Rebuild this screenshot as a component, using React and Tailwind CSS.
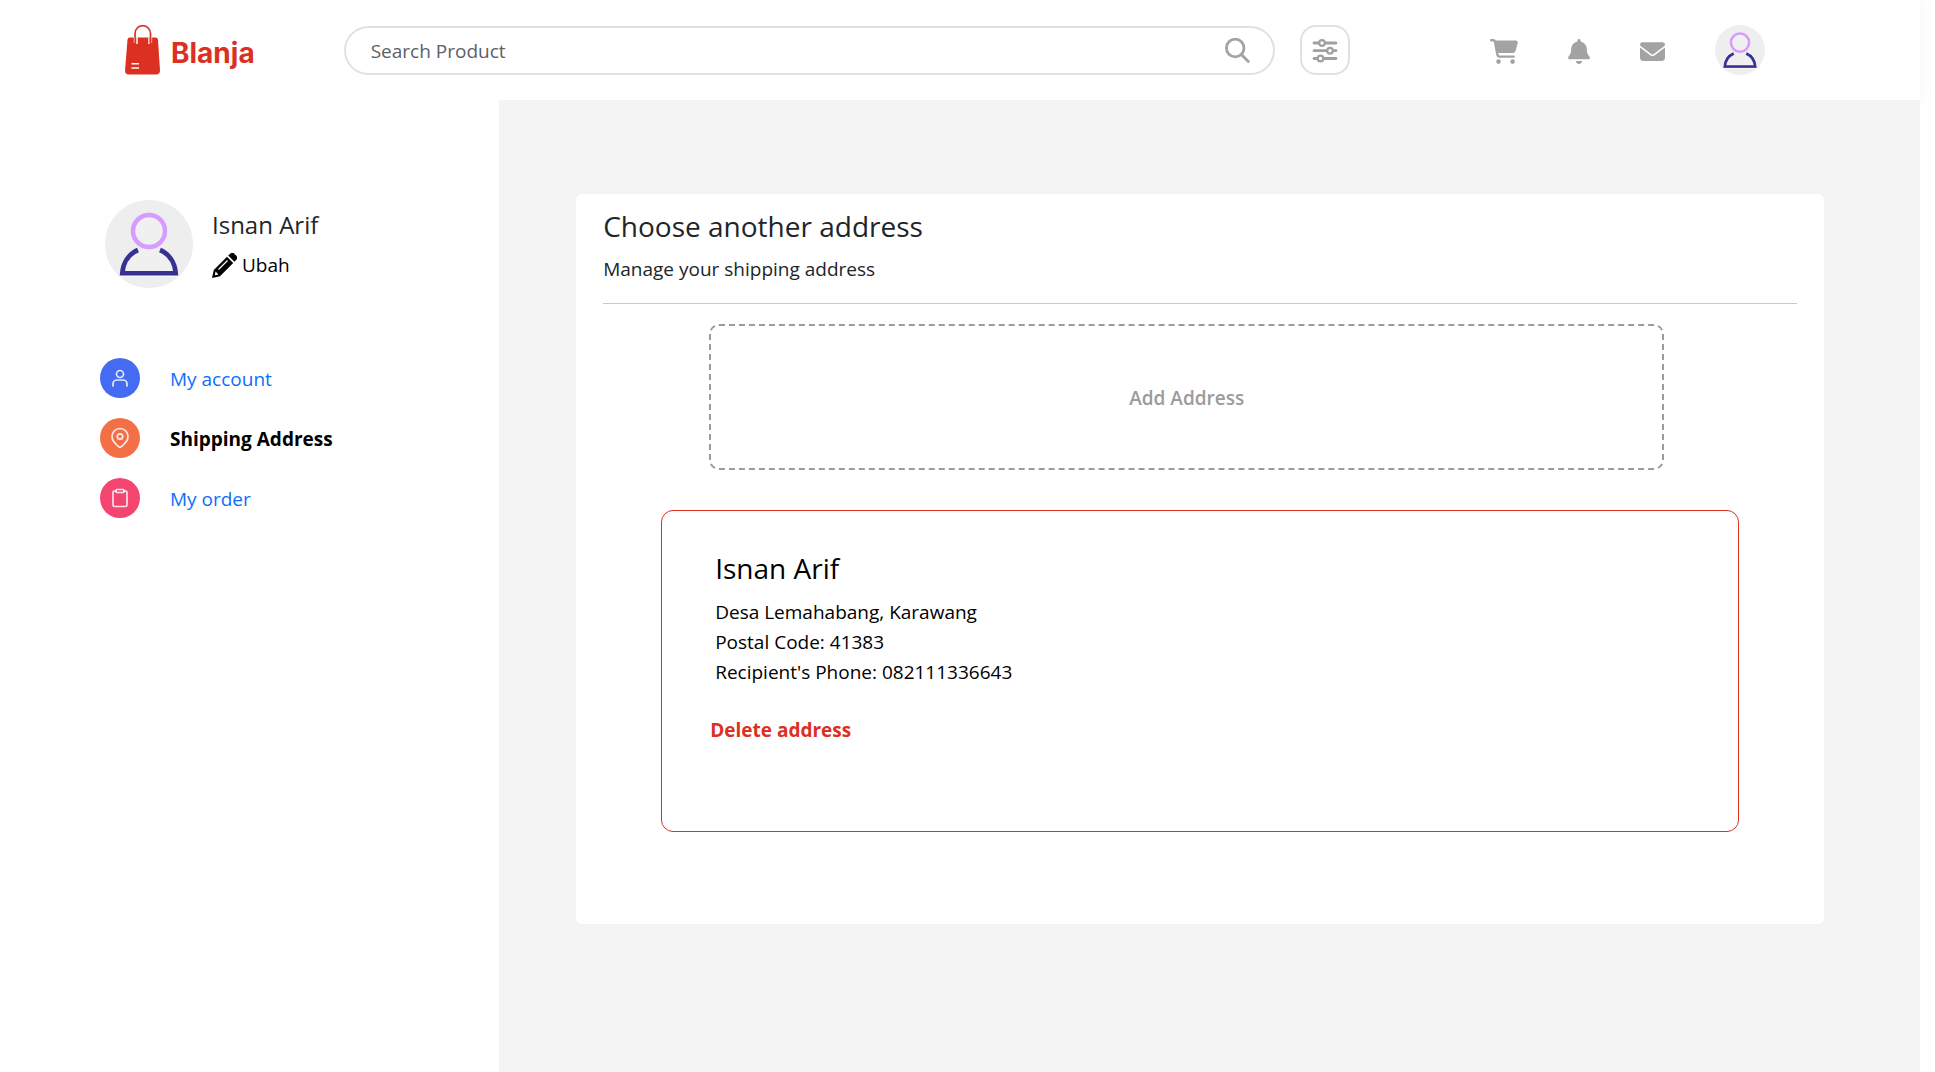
import { FaCartShopping, FaBell, FaEnvelope } from "react-icons/fa6";

function Logo() {
  return (
    <a href="#home" className="flex shrink-0 items-center gap-[10px] text-[#db3022]">
      <svg viewBox="0 0 36 50" className="h-[50px] w-9" aria-hidden="true">
        <path d="M5 12.500H30.500a2.500 2.500 0 0 1 2.500 2.300L35 45.500a4 4 0 0 1-4 4H4a4 4 0 0 1-4-4L2.500 14.800A2.500 2.500 0 0 1 5 12.500Z" fill="currentColor" />
        <path d="M12 19v-7M24 19v-7" fill="none" stroke="#fff" strokeWidth="1.400" />
        <path d="M10 18V8.500a7.700 7.700 0 0 1 15.500 0V18" fill="none" stroke="currentColor" strokeWidth="1.700" />
        <path d="M9.200 12V18M26.700 12V18" fill="none" stroke="#fff" strokeWidth="0.600" />
        <path d="M6.500 38.700h7.500M6.500 43h7.500" stroke="#fff" strokeWidth="1.400" />
      </svg>
      <span className="pt-[5px] font-['Inter',sans-serif] text-[28px] font-bold leading-9">Blanja</span>
    </a>
  );
}

function Avatar({ className }) {
  return (
    <svg viewBox="0 0 88 88" className={className} role="img" aria-label="Profile picture">
      <circle cx="44" cy="44" r="44" fill="#eee" />
      <circle cx="44" cy="31" r="16" fill="#f0f0f0" stroke="#d79cff" strokeWidth="4.500" />
      <path d="M33 50C23.500 54 18 63 17.300 73.300H70.700C70 63 64.500 54 55 50" fill="#f0f0f0" stroke="#393093" strokeWidth="4.700" />
      <path d="M15 76.200H73" stroke="#fff" strokeWidth="1" />
    </svg>
  );
}

const stroke = { fill: "none", stroke: "#fff", strokeOpacity: 0.85, strokeWidth: 1.7, strokeLinecap: "round", strokeLinejoin: "round" };

const links = [
  {
    label: "My account",
    color: "bg-[#456bf3]",
    icon: (
      <g {...stroke}>
        <circle cx="20" cy="16" r="3.500" />
        <path d="M13 28v-2a4 4 0 0 1 4-4h6a4 4 0 0 1 4 4v2" />
      </g>
    ),
  },
  {
    label: "Shipping Address",
    color: "bg-[#f36f45]",
    active: true,
    icon: (
      <g {...stroke}>
        <path d="M28 18.500c0 6-8 11-8 11s-8-5-8-11a8 8 0 0 1 16 0Z" />
        <circle cx="20" cy="18.500" r="2.700" />
      </g>
    ),
  },
  {
    label: "My order",
    color: "bg-[#f3456f]",
    icon: (
      <g {...stroke}>
        <path d="M24 13h1.500a1.500 1.500 0 0 1 1.500 1.500v12.500a1.500 1.500 0 0 1-1.500 1.500h-11a1.500 1.500 0 0 1-1.500-1.500v-12.500a1.500 1.500 0 0 1 1.500-1.500H16" />
        <rect x="16" y="11.500" width="8" height="3" rx="1" />
      </g>
    ),
  },
];

function Header() {
  return (
    <header className="flex h-[100px] items-center bg-white pl-[125px] pr-[155px] shadow-[0_0_16px_rgba(0,0,0,0.05)]">
      <Logo />
      <form className="ml-[89px] flex h-[49px] flex-1 items-center rounded-full border-2 border-[#e1e1e1] pl-[25px] pr-[23px]">
        <input
          type="text"
          aria-label="Search Product"
          placeholder="Search Product"
          className="min-w-0 flex-1 bg-transparent pt-[2px] text-[19px] leading-[30px] outline-none placeholder:text-[#5c6166]"
        />
        <button type="button" aria-label="Search">
          <svg viewBox="0 0 25 25" className="size-[25px]" fill="none" stroke="#a3a3a3" strokeWidth="2.800" strokeLinecap="round">
            <circle cx="10.200" cy="10" r="8.800" />
            <path d="M16.800 17l6.500 6.500" />
          </svg>
        </button>
      </form>
      <button type="button" aria-label="Filter" className="ml-[25px] flex size-[50px] items-center justify-center rounded-2xl border-2 border-[#e1e1e1]">
        <svg viewBox="0 0 26 25" className="h-[25px] w-[26px]" fill="#fff" stroke="#a0a0a0" strokeWidth="2.800" strokeLinecap="round">
          <path d="M2 5H24M2 12.700H24M2 20.500H24" />
          <circle cx="10" cy="5" r="2.800" strokeWidth="2.200" />
          <circle cx="18" cy="12.700" r="2.800" strokeWidth="2.200" />
          <circle cx="8.500" cy="20.500" r="2.800" strokeWidth="2.200" />
        </svg>
      </button>
      <nav className="ml-[140px] flex items-center gap-[50px] text-[#a3a3a3]" aria-label="Shortcuts">
        <a href="#cart" aria-label="Cart" className="pt-[2px]"><FaCartShopping className="h-[25px] w-7" /></a>
        <a href="#notifications" aria-label="Notifications" className="pt-[2px]"><FaBell className="h-[25px] w-[22px]" /></a>
        <a href="#messages" aria-label="Messages" className="pt-[2px]"><FaEnvelope className="size-[25px]" /></a>
        <a href="#profile" aria-label="Profile"><Avatar className="size-[50px]" /></a>
      </nav>
    </header>
  );
}

function Sidebar() {
  return (
    <aside className="w-[26%] shrink-0 bg-white pl-[100px] pt-[100px]">
      <div className="flex items-center gap-[19px] pl-[5px]">
        <Avatar className="size-[88px]" />
        <div className="pt-[2px]">
          <h2 className="text-2xl leading-[30px] text-[#212529]">Isnan Arif</h2>
          <button type="button" className="mt-[10px] flex items-center gap-[5px] text-[19px] leading-[30px] text-black">
            <svg viewBox="0 0 25 25" className="size-[25px]" aria-hidden="true">
              <path d="M0 25 1.800 17 15 3.800 21.200 10 8 23.200Z M16.200 2.600 18 .900a3.200 3.200 0 0 1 4.500 0l1.600 1.600a3.200 3.200 0 0 1 0 4.500l-1.700 1.800Z" />
              <path d="M3.500 18.500 6.500 21.500 2.800 22.200Z" fill="#fff" />
              <path d="M6.500 16.500 15.500 7.500" stroke="#fff" strokeWidth="1.300" />
            </svg>
            Ubah
          </button>
        </div>
      </div>
      <nav className="mt-[70px]" aria-label="Account">
        <ul className="flex flex-col gap-5">
          {links.map(({ label, color, icon, active }) => (
            <li key={label}>
              <a
                href={"#" + label.toLowerCase().replace(" ", "-")}
                aria-current={active ? "page" : undefined}
                className={"flex items-center gap-[30px] text-[19px] leading-[30px] " + (active ? "font-bold text-black" : "text-[#0d6efd]")}
              >
                <svg viewBox="0 0 40 40" className={"size-10 rounded-full " + color} aria-hidden="true">{icon}</svg>
                <span className="pt-[2px]">{label}</span>
              </a>
            </li>
          ))}
        </ul>
      </nav>
    </aside>
  );
}

export default function App() {
  return (
    <div className="flex min-h-screen flex-col bg-white pr-[15px] font-['Open_Sans','Noto_Sans',sans-serif]">
      <Header />
      <div className="relative flex flex-1">
        <Sidebar />
        <main className="flex-1 bg-[#f4f4f4] pb-[149px] pl-[77px] pr-24 pt-[94px]">
          <section className="rounded-md bg-white px-[27px] pb-[92px] pt-[14px] text-[#212529]">
            <h1 className="text-[28px] leading-9">Choose another address</h1>
            <p className="mt-2 text-[19px] leading-[34px]">Manage your shipping address</p>
            <hr className="mt-[17px] border-[#c8c9ca]" />
            <button
              type="button"
              className="ml-[106px] mt-5 block h-[146px] w-4/5 rounded-[10px] border-2 border-dashed border-[#9b9b9b] pt-[2px] text-[19px] font-semibold text-[#9b9b9b]"
            >
              Add Address
            </button>
            <article className="mx-[58px] mt-10 rounded-xl border border-[#db3022] px-12 pb-[86px] pt-[39px] text-black">
              <div className="pl-[5px]">
                <h2 className="text-[28px] leading-9">Isnan Arif</h2>
                <address className="mt-[11px] text-[19px] not-italic leading-[30px]">
                  Desa Lemahabang, Karawang
                  <br />
                  Postal Code: 41383
                  <br />
                  Recipient's Phone: 082111336643
                </address>
              </div>
              <button type="button" className="mt-7 block text-[19px] font-bold leading-[30px] text-[#db3022]">
                Delete address
              </button>
            </article>
          </section>
        </main>
      </div>
    </div>
  );
}
